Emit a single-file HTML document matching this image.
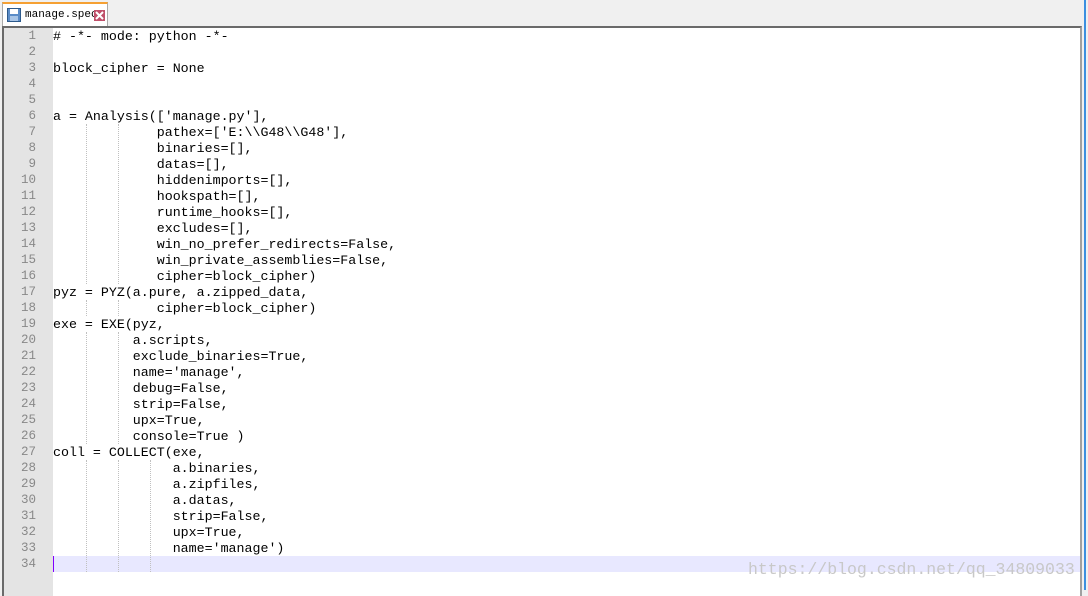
<!DOCTYPE html>
<html><head><style>
body{margin:0;width:1088px;height:590px;background:#f0f0f0;overflow:hidden;position:relative;font-family:"Liberation Mono",monospace;}
.tab{position:absolute;left:2px;top:2px;width:106px;height:24px;background:#fff;border-top:2px solid #f5a033;border-left:1px solid #aaa;border-right:1px solid #aaa;box-sizing:border-box;}
.tab span{position:absolute;left:22px;top:5px;font-size:11px;color:#000;}
.ed{position:absolute;left:2px;top:26px;width:1080px;height:570px;border-top:2px solid #6a6a6a;border-left:2px solid #6a6a6a;border-right:2px solid #a0a0a0;background:#fff;box-sizing:border-box;}
.gut{position:absolute;left:0;top:0;width:49px;height:100%;background:#e4e4e4;}
.ln{position:absolute;left:0;width:32px;text-align:right;font-size:12.5px;color:#888;line-height:16px;}
.code{position:absolute;left:49px;top:1px;font-size:13.3px;white-space:pre;color:#000;line-height:16px;margin:0;font-family:"Liberation Mono",monospace;}
.g{position:absolute;border-left:1px dotted #c0c0c0;}
.cur{position:absolute;left:49px;top:528px;width:1027px;height:16px;background:#e8e8ff;}
.wm{position:absolute;left:748px;top:560px;font-family:"Liberation Mono",monospace;font-size:16.5px;color:#c8c8c8;}
.sb{position:absolute;left:1084px;top:0;width:2px;height:590px;background:#3c8fe0;}
</style></head><body>
<div class="tab">
<svg style="position:absolute;left:4px;top:4px" width="14" height="14"><rect x="0.5" y="0.5" width="13" height="13" fill="#5b8cc7" stroke="#2d5a8c"/><rect x="3" y="1" width="8" height="5" fill="#fff"/><rect x="3" y="8" width="8" height="5" fill="#a9c5e6"/></svg>
<span>manage.spec</span>
<svg style="position:absolute;left:91px;top:6px" width="11" height="11"><rect width="11" height="11" fill="#c0506a"/><path d="M2 2L9 9M9 2L2 9" stroke="#fff" stroke-width="2"/></svg>
</div>
<div class="sb"></div>
<div class="ed">
<div class="gut"></div>
<div class="cur"></div>
<div style="position:absolute;left:49px;top:528px;width:1px;height:16px;background:#8000ff"></div>
<div class="g" style="left:82px;top:96px;height:160px"></div>
<div class="g" style="left:114px;top:96px;height:160px"></div>
<div class="g" style="left:82px;top:272px;height:16px"></div>
<div class="g" style="left:114px;top:272px;height:16px"></div>
<div class="g" style="left:82px;top:304px;height:112px"></div>
<div class="g" style="left:114px;top:304px;height:112px"></div>
<div class="g" style="left:82px;top:432px;height:112px"></div>
<div class="g" style="left:114px;top:432px;height:112px"></div>
<div class="g" style="left:146px;top:432px;height:112px"></div>
<pre class="code"># -*- mode: python -*-

block_cipher = None


a = Analysis(['manage.py'],
             pathex=['E:\\G48\\G48'],
             binaries=[],
             datas=[],
             hiddenimports=[],
             hookspath=[],
             runtime_hooks=[],
             excludes=[],
             win_no_prefer_redirects=False,
             win_private_assemblies=False,
             cipher=block_cipher)
pyz = PYZ(a.pure, a.zipped_data,
             cipher=block_cipher)
exe = EXE(pyz,
          a.scripts,
          exclude_binaries=True,
          name='manage',
          debug=False,
          strip=False,
          upx=True,
          console=True )
coll = COLLECT(exe,
               a.binaries,
               a.zipfiles,
               a.datas,
               strip=False,
               upx=True,
               name='manage')
</pre>
<div style="position:absolute;left:0;top:0">
<div class="ln" style="top:0px">1</div><div class="ln" style="top:16px">2</div><div class="ln" style="top:32px">3</div><div class="ln" style="top:48px">4</div><div class="ln" style="top:64px">5</div><div class="ln" style="top:80px">6</div><div class="ln" style="top:96px">7</div><div class="ln" style="top:112px">8</div><div class="ln" style="top:128px">9</div><div class="ln" style="top:144px">10</div><div class="ln" style="top:160px">11</div><div class="ln" style="top:176px">12</div><div class="ln" style="top:192px">13</div><div class="ln" style="top:208px">14</div><div class="ln" style="top:224px">15</div><div class="ln" style="top:240px">16</div><div class="ln" style="top:256px">17</div><div class="ln" style="top:272px">18</div><div class="ln" style="top:288px">19</div><div class="ln" style="top:304px">20</div><div class="ln" style="top:320px">21</div><div class="ln" style="top:336px">22</div><div class="ln" style="top:352px">23</div><div class="ln" style="top:368px">24</div><div class="ln" style="top:384px">25</div><div class="ln" style="top:400px">26</div><div class="ln" style="top:416px">27</div><div class="ln" style="top:432px">28</div><div class="ln" style="top:448px">29</div><div class="ln" style="top:464px">30</div><div class="ln" style="top:480px">31</div><div class="ln" style="top:496px">32</div><div class="ln" style="top:512px">33</div><div class="ln" style="top:528px">34</div>
</div>
</div>
<div class="wm">https://blog.csdn.net/qq_34809033</div>
</body></html>
